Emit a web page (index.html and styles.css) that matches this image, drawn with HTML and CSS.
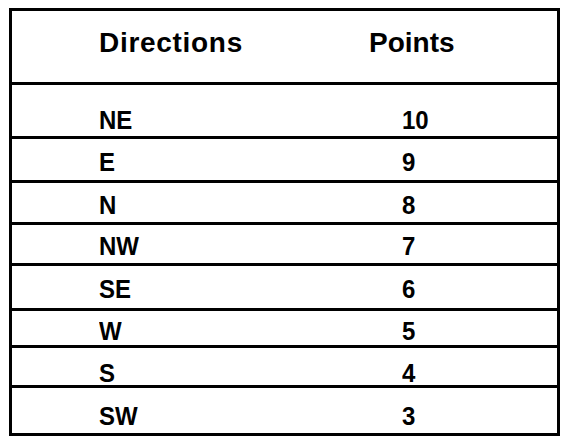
FILE: index.html
```html
<!DOCTYPE html>
<html>
<head>
<meta charset="utf-8">
<link rel="stylesheet" href="styles.css">
</head>
<body>
<div class="table">
  <div class="head">
    <div class="hcell dir">Directions</div>
    <div class="hcell">Points</div>
  </div>
  <div class="row r-ne"><div class="cell">NE</div><div class="cell">10</div></div>
  <div class="row r-e"><div class="cell">E</div><div class="cell">9</div></div>
  <div class="row r-n"><div class="cell">N</div><div class="cell">8</div></div>
  <div class="row r-nw"><div class="cell">NW</div><div class="cell">7</div></div>
  <div class="row r-se"><div class="cell">SE</div><div class="cell">6</div></div>
  <div class="row r-w"><div class="cell">W</div><div class="cell">5</div></div>
  <div class="row r-s"><div class="cell">S</div><div class="cell">4</div></div>
  <div class="row r-sw"><div class="cell">SW</div><div class="cell">3</div></div>
</div>
</body>
</html>
```
FILE: styles.css
```css
html, body {
  margin: 0;
  padding: 0;
  background: #fff;
}
body {
  font-family: "Liberation Sans", Arial, sans-serif;
  font-weight: bold;
  color: #000;
}
.table {
  box-sizing: border-box;
  margin: 8px 0 0 9px;
  width: 551px;
  height: 428px;
  border: 3px solid #000;
  display: flex;
  flex-direction: column;
}
.head {
  box-sizing: border-box;
  height: 74px;
  padding: 18px 0 0 87px;
  border-bottom: 3px solid #000;
  display: grid;
  grid-template-columns: 270px 1fr;
  align-items: start;
}
.hcell {
  font-size: 28px;
  line-height: 28px;
}
.dir {
  letter-spacing: 0.7px;
}
.row {
  box-sizing: border-box;
  padding-left: 87px;
  border-bottom: 3px solid #000;
  display: grid;
  grid-template-columns: 303px 1fr;
  align-items: end;
}
.cell {
  font-size: 24px;
  line-height: 24px;
  transform: scaleY(1.1);
}
.r-ne { height: 54px; padding-bottom: 4px; }
.r-e  { height: 44px; padding-bottom: 6px; }
.r-n  { height: 42px; padding-bottom: 5px; }
.r-nw { height: 41px; padding-bottom: 5px; }
.r-se { height: 45px; padding-bottom: 7px; }
.r-w  { height: 37px; padding-bottom: 2px; }
.r-s  { height: 40px; padding-bottom: 0; }
.r-sw { height: 45px; padding-bottom: 5px; border-bottom: none; }
```
